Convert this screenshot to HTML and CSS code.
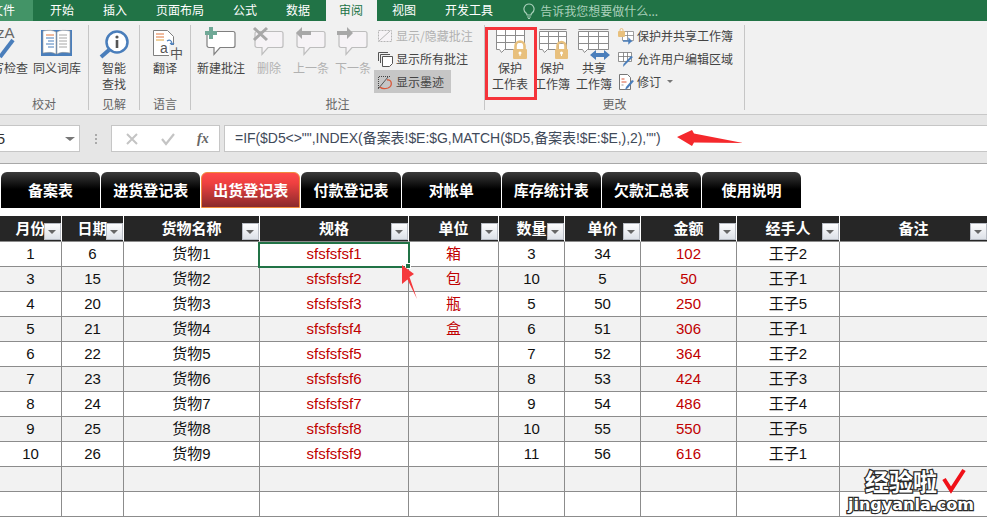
FILE: index.html
```html
<!DOCTYPE html>
<html lang="zh-CN">
<head>
    <meta charset="UTF-8">
    <title>出货登记表</title>
    <link rel="stylesheet" href="styles.css">
</head>
<body>
<div class="app">
    <!-- title tabs -->
    <div class="menu">
        <div class="menu-file">文件</div>
        <div class="menu-item">开始</div>
        <div class="menu-item">插入</div>
        <div class="menu-item">页面布局</div>
        <div class="menu-item">公式</div>
        <div class="menu-item">数据</div>
        <div class="menu-item active">审阅</div>
        <div class="menu-item">视图</div>
        <div class="menu-item">开发工具</div>
        <div class="tell-me">
            <svg width="12" height="16" viewBox="0 0 12 16"><path d="M6 1a5 5 0 0 0-3 9c.6.6 1 1.200 1 2h4c0-.8.4-1.400 1-2a5 5 0 0 0-3-9zM4 14h4M5 15.500h2" fill="none" stroke="#a9d0ba" stroke-width="1.200"/></svg>
            <span>告诉我您想要做什么...</span>
        </div>
    </div>

    <!-- ribbon -->
    <div class="ribbon">
        <div class="group g-proof">
            <div class="group-body">
                <div class="rb rb-48 rb-cut">
                    <svg class="ico" viewBox="0 0 36 36"><text x="11" y="13" class="ico-text">zA</text><path d="M27 15L14 32" stroke="#4a7ebb" stroke-width="4"/></svg>
                    <span>拼写检查</span>
                </div>
                <div class="rb rb-48">
                    <svg class="ico" viewBox="0 0 36 36">
                        <path d="M2 5h31v26H2z" fill="#4a7ebb"/>
                        <path d="M4 6c5-1 10-1 13 1v22c-3-2-8-2-13-1zM31 6c-5-1-10-1-13 1v22c3-2 8-2 13-1z" fill="#fff" stroke="#9a9a9a" stroke-width=".6"/>
                        <path d="M7 10h8" stroke="#e0763c"/>
                        <path d="M7 13h8M9 16h6M7 19h8M9 22h6" stroke="#4a7ebb"/>
                        <path d="M20 10h8M20 13h8M20 16h8M20 19h8M20 22h8" stroke="#a6a6a6"/>
                    </svg>
                    <span>同义词库</span>
                </div>
            </div>
            <div class="group-label">校对</div>
        </div>

        <div class="group g-insight">
            <div class="group-body center">
                <div class="rb rb-36">
                    <svg class="ico" viewBox="0 0 36 36">
                        <circle cx="21" cy="17" r="10.500" fill="#fff" stroke="#4a7ebb" stroke-width="2.500"/>
                        <path d="M13 25L5 32" stroke="#4a7ebb" stroke-width="4"/>
                        <circle cx="21" cy="12" r="1.600" fill="#555"/>
                        <path d="M21 15v8" stroke="#555" stroke-width="2.600"/>
                    </svg>
                    <span>智能<br>查找</span>
                </div>
            </div>
            <div class="group-label">见解</div>
        </div>

        <div class="group g-lang">
            <div class="group-body center">
                <div class="rb rb-36">
                    <svg class="ico" viewBox="0 0 36 36">
                        <path d="M6.500 5.500h14l6 6v19h-20z" fill="#fff" stroke="#7f7f7f"/>
                        <path d="M9 9h8M9 12h8" stroke="#e0763c"/>
                        <path d="M9 15h8" stroke="#e0a33c"/>
                        <path d="M20 16c3-2 5 0 5 3m-2-1l2 2 2-2" fill="none" stroke="#4a7ebb" stroke-width="1.200"/>
                        <text x="13" y="28" class="ico-text small">a</text>
                        <rect x="22" y="20" width="14" height="14" fill="#f1f1f1"/>
                        <text x="23" y="33" class="ico-text han">中</text>
                    </svg>
                    <span>翻译</span>
                </div>
            </div>
            <div class="group-label">语言</div>
        </div>

        <div class="group g-notes">
            <div class="group-body">
                <div class="rb rb-48">
                    <svg class="ico" viewBox="0 0 36 36">
                        <path class="bubble" d="M6 6.500h24a2 2 0 0 1 2 2v12a2 2 0 0 1-2 2H17l-6 7v-7H6a2 2 0 0 1-2-2v-12a2 2 0 0 1 2-2z"/>
                        <path d="M8 2v12M2 8h12" stroke="#6fa896" stroke-width="4"/>
                    </svg>
                    <span>新建批注</span>
                </div>
                <div class="rb rb-36 off">
                    <svg class="ico" viewBox="0 0 36 36">
                        <path class="bubble off" d="M6 6.500h24a2 2 0 0 1 2 2v12a2 2 0 0 1-2 2H17l-6 7v-7H6a2 2 0 0 1-2-2v-12a2 2 0 0 1 2-2z"/>
                        <path d="M3 3l13 12M16 3L3 15" stroke="#a8a8a8" stroke-width="3"/>
                    </svg>
                    <span>删除</span>
                </div>
                <div class="rb rb-36 off">
                    <svg class="ico" viewBox="0 0 36 36">
                        <path class="bubble off" d="M6 6.500h24a2 2 0 0 1 2 2v12a2 2 0 0 1-2 2H17l-6 7v-7H6a2 2 0 0 1-2-2v-12a2 2 0 0 1 2-2z"/>
                        <path d="M3 8l6-6v4h9v4H9v4z" fill="#a8a8a8"/>
                    </svg>
                    <span>上一条</span>
                </div>
                <div class="rb rb-36 off">
                    <svg class="ico" viewBox="0 0 36 36">
                        <path class="bubble off" d="M6 6.500h24a2 2 0 0 1 2 2v12a2 2 0 0 1-2 2H17l-6 7v-7H6a2 2 0 0 1-2-2v-12a2 2 0 0 1 2-2z"/>
                        <path d="M18 8l-6-6v4H2v4h10v4z" fill="#a8a8a8"/>
                    </svg>
                    <span>下一条</span>
                </div>
                <div class="stack s-notes">
                    <div class="row off">
                        <svg class="ico-s" viewBox="0 0 16 16"><rect x="1.500" y="2.500" width="13" height="11" fill="#f6f3f6" stroke="#b5b5b5" stroke-dasharray="2 1"/><path d="M2 13L13 3" stroke="#b5b5b5"/></svg>
                        <span>显示/隐藏批注</span>
                    </div>
                    <div class="row">
                        <svg class="ico-s" viewBox="0 0 16 16"><path d="M1.500 10V1.500H11M3.500 12V3.500H13" fill="none" stroke="#555"/><path d="M5.500 5.500h10v7l-3 3h-7z" fill="#fff" stroke="#555"/></svg>
                        <span>显示所有批注</span>
                    </div>
                    <div class="row pressed">
                        <svg class="ico-s" viewBox="0 0 16 16"><path d="M1.500 14V2.500H14" fill="none" stroke="#444" stroke-dasharray="1 1"/><path d="M1 15L11 3" stroke="#555"/><path d="M10 6c5-1 6 6 1 8-3 1-6 1-8-1" fill="none" stroke="#d8583a" stroke-width="1.300"/></svg>
                        <span>显示墨迹</span>
                    </div>
                </div>
            </div>
            <div class="group-label">批注</div>
        </div>

        <div class="group g-change">
            <div class="group-body">
                <div class="rb rb-36">
                    <svg class="ico" viewBox="0 0 36 36">
                        <path class="sheet" d="M4.500 4.500h28v20h-20l-3 3-2-3h-3zM4.500 10.500h28M4.500 17.500h28M13.500 4.500v20M23.500 4.500v20"/>
                        <path d="M23.500 25v-4a4.500 4.500 0 0 1 9 0v4" fill="none" stroke="#e8c07d" stroke-width="2.600"/>
                        <rect x="21" y="24" width="14" height="10" rx="1" fill="#e8c07d"/>
                        <circle cx="28" cy="28" r="1.500" fill="#fff"/><path d="M28 28v3" stroke="#fff"/>
                    </svg>
                    <span>保护<br>工作表</span>
                </div>
                <div class="rb rb-36">
                    <svg class="ico" viewBox="0 0 36 36">
                        <path class="sheet" d="M5.500 6.500h27v18h-19l-3 3-2-3h-3zM5.500 11.500h27M5.500 18.500h27M14.500 6.500v18M24.500 6.500v18"/>
                        <path d="M5.500 4.500h27" stroke="#888"/>
                        <path d="M23.500 25v-4a4 4 0 0 1 8 0v4" fill="none" stroke="#e8c07d" stroke-width="2.600"/>
                        <rect x="21" y="24" width="13" height="10" rx="1" fill="#e8c07d"/>
                        <circle cx="27.500" cy="28" r="1.500" fill="#fff"/><path d="M27.500 28v3" stroke="#fff"/>
                    </svg>
                    <span>保护<br>工作簿</span>
                </div>
                <div class="rb rb-36">
                    <svg class="ico" viewBox="0 0 36 36">
                        <path class="sheet" d="M2.500 6.500h30v18h-21l-3 3-2-3h-4zM2.500 11.500h30M2.500 18.500h30M12.500 6.500v18M22.500 6.500v18"/>
                        <path d="M2.500 4.500h30" stroke="#888"/>
                        <path d="M14 30l6-5v3h8v-3l6 5-6 5v-3h-8v3z" fill="#4a7ebb"/>
                    </svg>
                    <span>共享<br>工作簿</span>
                </div>
                <div class="stack s-change">
                    <div class="row">
                        <svg class="ico-s" viewBox="0 0 16 16"><path d="M4.500 3.500h11v9h-11zM4.500 7.500h11M9.500 3.500v9" fill="#fff" stroke="#888" stroke-width=".8"/><rect x="0" y="3" width="7" height="6" rx="1" fill="#e8c07d"/><path d="M2 3V2a1.500 1.500 0 0 1 3 0v1" fill="none" stroke="#e8c07d"/><path d="M5 13h8l-2-2v4l2-2" fill="none" stroke="#4a7ebb" stroke-width="1.400"/></svg>
                        <span>保护并共享工作簿</span>
                    </div>
                    <div class="row">
                        <svg class="ico-s" viewBox="0 0 16 16"><path d="M.5 1.500h13v9H.5zM.5 5.500h13M5.500 1.500v9M9.500 1.500v9" fill="#fff" stroke="#777" stroke-width=".8"/><path d="M15 6l-8 8-2 2 .5-3L13 5z" fill="#4a7ebb"/></svg>
                        <span>允许用户编辑区域</span>
                    </div>
                    <div class="row">
                        <svg class="ico-s" viewBox="0 0 16 16"><path d="M1.500.5h8l3 3v12h-11z" fill="#fff" stroke="#777"/><path d="M3.500 5h3M3.500 8h5" stroke="#d8583a"/><path d="M3.500 11h2" stroke="#999"/><path d="M16 7l-6 7-3 2 1-3 6-7z" fill="#4a7ebb"/></svg>
                        <span>修订</span>
                        <i class="caret"></i>
                    </div>
                </div>
            </div>
            <div class="group-label">更改</div>
        </div>
    </div>

    <!-- formula bar -->
    <div class="formula-bar">
        <div class="name-box"><span>D5</span><i class="caret dark"></i></div>
        <div class="dots"><b></b><b></b><b></b></div>
        <div class="fx-box">
            <svg width="14" height="14" viewBox="0 0 14 14"><path d="M2 2l10 10M12 2L2 12" stroke="#c4c4c4" stroke-width="2"/></svg>
            <svg width="14" height="14" viewBox="0 0 14 14"><path d="M1 7l4 5 8-10" fill="none" stroke="#c4c4c4" stroke-width="2.200"/></svg>
            <span class="fx">fx</span>
        </div>
        <div class="formula">=IF($D5&lt;&gt;"",INDEX(备案表!$E:$G,MATCH($D5,备案表!$E:$E,),2),"")</div>
    </div>

    <!-- sheet buttons -->
    <div class="sheets">
        <div class="sheet-btn">备案表</div>
        <div class="sheet-btn">进货登记表</div>
        <div class="sheet-btn current">出货登记表</div>
        <div class="sheet-btn">付款登记表</div>
        <div class="sheet-btn">对帐单</div>
        <div class="sheet-btn">库存统计表</div>
        <div class="sheet-btn">欠款汇总表</div>
        <div class="sheet-btn">使用说明</div>
    </div>

    <table class="grid">
        <colgroup>
            <col class="c1"><col class="c2"><col class="c3"><col class="c4"><col class="c5">
            <col class="c6"><col class="c7"><col class="c8"><col class="c9"><col class="c10">
        </colgroup>
        <thead>
            <tr>
                <th>月份<i class="filter"></i></th>
                <th>日期<i class="filter"></i></th>
                <th>货物名称<i class="filter"></i></th>
                <th>规格<i class="filter"></i></th>
                <th>单位<i class="filter"></i></th>
                <th>数量<i class="filter"></i></th>
                <th>单价<i class="filter"></i></th>
                <th>金额<i class="filter"></i></th>
                <th>经手人<i class="filter"></i></th>
                <th>备注<i class="filter"></i></th>
            </tr>
        </thead>
        <tbody>
            <tr><td>1</td><td>6</td><td>货物1</td><td class="red">sfsfsfsf1</td><td class="red">箱</td><td>3</td><td>34</td><td class="red">102</td><td>王子2</td><td></td></tr>
            <tr><td>3</td><td>15</td><td>货物2</td><td class="red">sfsfsfsf2</td><td class="red">包</td><td>10</td><td>5</td><td class="red">50</td><td>王子1</td><td></td></tr>
            <tr><td>4</td><td>20</td><td>货物3</td><td class="red">sfsfsfsf3</td><td class="red">瓶</td><td>5</td><td>50</td><td class="red">250</td><td>王子5</td><td></td></tr>
            <tr><td>5</td><td>21</td><td>货物4</td><td class="red">sfsfsfsf4</td><td class="red">盒</td><td>6</td><td>51</td><td class="red">306</td><td>王子1</td><td></td></tr>
            <tr><td>6</td><td>22</td><td>货物5</td><td class="red">sfsfsfsf5</td><td></td><td>7</td><td>52</td><td class="red">364</td><td>王子2</td><td></td></tr>
            <tr><td>7</td><td>23</td><td>货物6</td><td class="red">sfsfsfsf6</td><td></td><td>8</td><td>53</td><td class="red">424</td><td>王子3</td><td></td></tr>
            <tr><td>8</td><td>24</td><td>货物7</td><td class="red">sfsfsfsf7</td><td></td><td>9</td><td>54</td><td class="red">486</td><td>王子4</td><td></td></tr>
            <tr><td>9</td><td>25</td><td>货物8</td><td class="red">sfsfsfsf8</td><td></td><td>10</td><td>55</td><td class="red">550</td><td>王子5</td><td></td></tr>
            <tr><td>10</td><td>26</td><td>货物9</td><td class="red">sfsfsfsf9</td><td></td><td>11</td><td>56</td><td class="red">616</td><td>王子1</td><td></td></tr>
            <tr><td></td><td></td><td></td><td></td><td></td><td></td><td></td><td></td><td></td><td></td></tr>
            <tr><td></td><td></td><td></td><td></td><td></td><td></td><td></td><td></td><td></td><td></td></tr>
        </tbody>
    </table>

    <!-- things lying over the sheet -->
    <div class="sel-cell"><i></i></div>
    <div class="red-box"></div>
    <svg class="arrows" width="987" height="520" viewBox="0 0 987 520">
        <path d="M677 137L692 130 694 133.500 743 143 694 142.500 692 146z" fill="#f5282c"/>
        <path d="M402 265L414 274 409.500 277 417 299 407.500 279.500 402 284z" fill="#f5383c"/>
        <path d="M944 479l7 11 13-20" fill="none" stroke="#f01018" stroke-width="4"/>
    </svg>
    <div class="mark mark-cn">经验啦</div>
    <div class="mark mark-en">jingyanla.com</div>
</div>
</body>
</html>
```

FILE: styles.css
```css
* {
    box-sizing: border-box;
}
html, body {
    margin: 0;
    padding: 0;
    background: #fff;
}
.app {
    position: relative;
    width: 987px;
    height: 520px;
    overflow: hidden;
    font-family: "Noto Sans CJK SC", sans-serif;
    font-size: 12px;
    color: #444;
}

/* title tabs */
.menu {
    display: flex;
    gap: 2px;
    height: 21px;
    background: #217346;
    color: #fff;
    line-height: 19px;
}
.menu-file {
    width: 33px;
    margin-right: 2px;
    padding-right: 18px;
    background: #439467;
    text-align: right;
    white-space: nowrap;
    overflow: hidden;
    direction: rtl;
}
.menu-item {
    padding: 0 14px 0 13px;
}
.menu-item.active {
    background: #f1f1f1;
    color: #217346;
}
.tell-me {
    display: flex;
    align-items: center;
    gap: 5px;
    margin-left: 14px;
    color: #a9d0ba;
}

/* ribbon */
.ribbon {
    display: flex;
    height: 94px;
    padding-top: 4px;
    background: #f1f1f1;
    border-bottom: 1px solid #c8c8c8;
}
.group {
    display: flex;
    flex-direction: column;
    height: 85px;
    border-right: 1px solid #c6c6c6;
    overflow: hidden;
}
.g-proof { width: 89px; }
.g-insight { width: 51px; }
.g-lang { width: 51px; }
.g-notes { width: 294px; }
.g-change { width: 260px; }
.group-body {
    display: flex;
    flex: 1;
    gap: 6px;
}
.group-body.center {
    justify-content: center;
}
.g-proof .group-body { gap: 5px; }
.g-notes .group-body { padding-left: 6px; }
.g-change .group-body { padding-left: 7px; }
.group-label {
    height: 13px;
    line-height: 13px;
    text-align: center;
    color: #666;
}
.rb {
    display: flex;
    flex-direction: column;
    align-items: center;
    flex: none;
    line-height: 16px;
    text-align: center;
    white-space: nowrap;
}
.rb-48 { width: 48px; }
.rb-36 { width: 36px; }
.rb-cut { margin-left: -20px; }
.rb.off, .row.off {
    color: #b1b1b1;
}
.ico {
    flex: none;
    width: 36px;
    height: 36px;
    margin-bottom: -1px;
    overflow: visible;
}
.ico-text {
    font-family: "Liberation Sans", sans-serif;
    font-size: 15px;
    fill: #666;
}
.ico-text.small { font-size: 14px; fill: #555; }
.ico-text.han { font-family: "Noto Sans CJK SC", sans-serif; font-size: 13px; fill: #555; }
.bubble {
    fill: #fff;
    stroke: #7f7f7f;
    stroke-width: 1.2;
}
.bubble.off {
    fill: #f6f3f6;
    stroke: #bdbdbd;
}
.sheet {
    fill: #fff;
    stroke: #8c8c8c;
    stroke-width: 1;
}
.stack {
    display: flex;
    flex-direction: column;
    margin-top: -1px;
}
.s-notes { margin-left: -3px; }
.row {
    display: flex;
    align-items: center;
    gap: 3px;
    height: 23px;
    padding-left: 3px;
    white-space: nowrap;
}
.row.pressed {
    align-self: flex-start;
    width: 77px;
    background: #c6c6c6;
}
.s-change .row { padding-left: 0; }
.ico-s {
    flex: none;
    width: 16px;
    height: 16px;
    overflow: visible;
}
.caret {
    width: 0;
    height: 0;
    margin-left: 3px;
    border: 3px solid transparent;
    border-top: 3px solid #777;
    border-bottom: 0;
}
.caret.dark {
    margin: 0;
    border-width: 4px 5px 0;
    border-top-color: #777;
}

/* formula bar */
.formula-bar {
    display: flex;
    height: 49px;
    padding: 10px 0 11px;
    background: #e6e6e6;
    border-bottom: 1px solid #a8a8a8;
}
.name-box {
    display: flex;
    align-items: center;
    justify-content: space-between;
    width: 80px;
    padding-right: 4px;
    background: #fff;
    border: 1px solid #c6c6c6;
    border-left: 0;
}
.name-box span {
    margin-left: -14px;
    font-family: "Liberation Sans", sans-serif;
    font-size: 15px;
    color: #333;
}
.dots {
    display: flex;
    flex-direction: column;
    justify-content: center;
    gap: 2px;
    width: 31px;
    padding-left: 15px;
}
.dots b {
    width: 2px;
    height: 2px;
    background: #aaa;
}
.fx-box {
    display: flex;
    align-items: center;
    width: 109px;
    padding-left: 13px;
    gap: 22px;
    margin-right: 4px;
    background: #fff;
    border: 1px solid #c6c6c6;
}
.fx {
    font-family: "Liberation Serif", serif;
    font-style: italic;
    font-weight: bold;
    font-size: 14px;
    color: #666;
}
.formula {
    flex: 1;
    padding-left: 10px;
    background: #fff;
    border: 1px solid #c6c6c6;
    border-right: 0;
    font-family: "Liberation Sans", "Noto Sans CJK SC", sans-serif;
    font-size: 14px;
    letter-spacing: -0.05px;
    line-height: 25px;
    color: #3f4a5a;
    white-space: nowrap;
}

/* sheet buttons */
.sheets {
    display: flex;
    gap: 1px;
    height: 36px;
    margin: 8px 0;
    padding-left: 1px;
}
.sheet-btn {
    flex: 0 0 99.15px;
    background: linear-gradient(#3c3c3c, #000 48%);
    border-radius: 6px 6px 0 0;
    color: #fff;
    font-size: 15px;
    font-weight: bold;
    line-height: 36px;
    text-align: center;
}
.sheet-btn.current {
    background: linear-gradient(#ff4a4a, #ee4040 30%, #8a2a2c);
    border: 1px solid #f08a3c;
    line-height: 34px;
}

/* table */
.grid {
    width: 987px;
    table-layout: fixed;
    border-collapse: separate;
    border-spacing: 0;
    font-family: "Liberation Sans", "Noto Sans CJK SC", sans-serif;
    font-size: 15px;
    color: #111;
}
.c1, .c2 { width: 62px; }
.c3 { width: 136px; }
.c4 { width: 149px; }
.c5 { width: 90px; }
.c6 { width: 66px; }
.c7 { width: 76px; }
.c8 { width: 96px; }
.c9 { width: 103px; }
.c10 { width: 147px; }
.grid th {
    position: relative;
    height: 26px;
    padding: 0 0 2px;
    background: #262626;
    border-right: 1px solid #fff;
    border-bottom: 1px solid #8c8c8c;
    color: #fff;
    font-family: "Noto Sans CJK SC", sans-serif;
    font-size: 15px;
    font-weight: bold;
    line-height: 20px;
}
.grid th:last-child {
    border-right: 0;
}
.grid td {
    height: 25px;
    padding: 0;
    border-right: 1px solid #8c8c8c;
    border-bottom: 1px solid #8c8c8c;
    line-height: 22px;
    text-align: center;
}
.grid td:last-child {
    border-right: 0;
}
.grid tbody tr:nth-child(even) td {
    background: #f2f2f2;
}
.grid td.red {
    color: #c00000;
}
.filter {
    position: absolute;
    right: 0;
    bottom: 1px;
    width: 17px;
    height: 17px;
    background: linear-gradient(#fdfdfe, #dde1e8);
    border: 1px solid #b8bcc4;
}
.filter::after {
    content: "";
    position: absolute;
    left: 3px;
    top: 6px;
    border: 4px solid transparent;
    border-top: 4px solid #666;
    border-bottom: 0;
}

/* overlays */
.sel-cell {
    position: absolute;
    left: 258px;
    top: 242px;
    width: 152px;
    height: 26px;
    border: 2px solid #217346;
}
.sel-cell i {
    position: absolute;
    right: -3px;
    bottom: -3px;
    width: 6px;
    height: 6px;
    background: #217346;
    border: 1px solid #fff;
}
.red-box {
    position: absolute;
    left: 485px;
    top: 27px;
    width: 52px;
    height: 73px;
    border: 3px solid #f5333a;
}
.arrows {
    position: absolute;
    left: 0;
    top: 0;
}
.mark {
    position: absolute;
    font-weight: bold;
    color: #fff;
    -webkit-text-stroke: 2.500px #2a2a2a;
    paint-order: stroke fill;
    white-space: nowrap;
}
.mark-cn {
    left: 865px;
    top: 464px;
    font-size: 24px;
    line-height: 34px;
}
.mark-en {
    left: 848px;
    top: 493px;
    font-family: "DejaVu Sans", sans-serif;
    font-size: 16px;
    line-height: 24px;
}
```
